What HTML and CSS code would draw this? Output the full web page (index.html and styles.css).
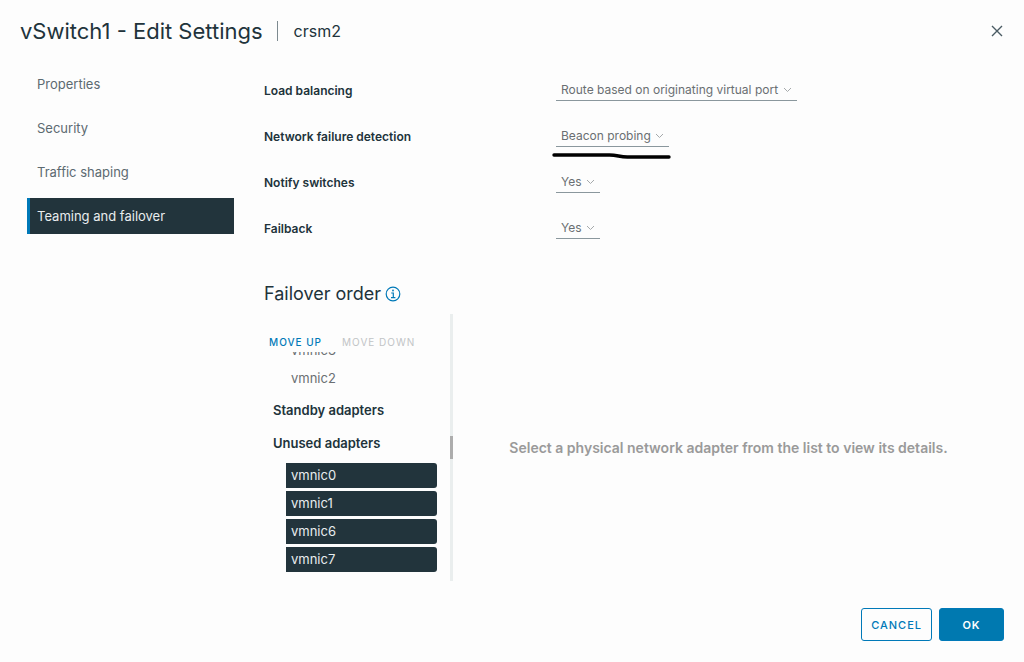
FILE: index.html
```html
<!DOCTYPE html>
<html lang="en">
<head>
    <meta charset="UTF-8">
    <meta name="viewport" content="width=device-width, initial-scale=1.0">
    <title>vSwitch1 - Edit Settings</title>
    <link rel="stylesheet" href="styles.css">
</head>
<body>
    <div class="dialog">
        <header class="dialog-header">
            <h1>vSwitch1 - Edit Settings</h1>
            <span class="host">crsm2</span>
            <button type="button" class="close" aria-label="Close">
                <svg width="12" height="12" viewBox="0 0 12 12"><path d="M1 1l10 10M11 1L1 11" fill="none" stroke="#4a5b63" stroke-width="1.4"/></svg>
            </button>
        </header>

        <div class="dialog-body">
            <nav class="sidebar">
                <a href="#properties">Properties</a>
                <a href="#security">Security</a>
                <a href="#shaping">Traffic shaping</a>
                <a href="#teaming" class="active">Teaming and failover</a>
            </nav>

            <main class="content">
                <form class="settings">
                    <div class="form-row">
                        <label for="loadBalancing">Load balancing</label>
                        <div class="select">
                            <select id="loadBalancing"><option>Route based on originating virtual port</option></select>
                            <svg class="caret" width="9" height="6" viewBox="0 0 9 6"><path d="M1 1L4.5 4.5L8 1" fill="none" stroke="#a5a9ab"/></svg>
                        </div>
                    </div>
                    <div class="form-row">
                        <label for="failureDetection">Network failure detection</label>
                        <div class="select">
                            <select id="failureDetection"><option>Beacon probing</option></select>
                            <svg class="caret" width="9" height="6" viewBox="0 0 9 6"><path d="M1 1L4.5 4.5L8 1" fill="none" stroke="#a5a9ab"/></svg>
                            <svg class="marker" height="6" viewBox="0 0 120 6" preserveAspectRatio="none"><path d="M2 2H58C66 2 68 4 76 4H118" fill="none" stroke="#000" stroke-width="3.4" stroke-linecap="round"/></svg>
                        </div>
                    </div>
                    <div class="form-row">
                        <label for="notifySwitches">Notify switches</label>
                        <div class="select">
                            <select id="notifySwitches"><option>Yes</option><option>No</option></select>
                            <svg class="caret" width="9" height="6" viewBox="0 0 9 6"><path d="M1 1L4.5 4.5L8 1" fill="none" stroke="#a5a9ab"/></svg>
                        </div>
                    </div>
                    <div class="form-row">
                        <label for="failback">Failback</label>
                        <div class="select">
                            <select id="failback"><option>Yes</option><option>No</option></select>
                            <svg class="caret" width="9" height="6" viewBox="0 0 9 6"><path d="M1 1L4.5 4.5L8 1" fill="none" stroke="#a5a9ab"/></svg>
                        </div>
                    </div>
                </form>

                <h2>
                    Failover order
                    <svg width="16" height="16" viewBox="0 0 16 16" fill="none" stroke="#0079b8"><circle cx="8" cy="8" r="6.8" stroke-width="1.2"/><path d="M6.2 7H8.3V11.5M6 11.6H10.4" stroke-width="1.2"/><circle cx="8" cy="4.5" r=".9" fill="#0079b8" stroke="none"/></svg>
                </h2>

                <div class="failover">
                    <section class="adapters">
                        <div class="toolbar">
                            <button type="button">MOVE UP</button>
                            <button type="button" disabled>MOVE DOWN</button>
                        </div>
                        <div class="adapter-list">
                            <ul>
                                <li>vmnic3</li>
                                <li>vmnic2</li>
                            </ul>
                            <h3>Standby adapters</h3>
                            <h3>Unused adapters</h3>
                            <ul>
                                <li class="selected">vmnic0</li>
                                <li class="selected">vmnic1</li>
                                <li class="selected">vmnic6</li>
                                <li class="selected">vmnic7</li>
                            </ul>
                        </div>
                    </section>
                    <div class="splitter"><span class="handle"></span></div>
                    <p class="details">Select a physical network adapter from the list to view its details.</p>
                </div>
            </main>
        </div>

        <footer class="dialog-footer">
            <button type="button" class="btn">CANCEL</button>
            <button type="button" class="btn btn-primary">OK</button>
        </footer>
    </div>
</body>
</html>
```
FILE: styles.css
```css
* {
    box-sizing: border-box;
}
body {
    margin: 0;
    background: #fdfdfd;
    color: #21333b;
    font-family: Inter, "Open Sans", sans-serif;
    font-size: 12px;
}
h1, h2, h3, ul, p {
    margin: 0;
    padding: 0;
}
button {
    font-family: inherit;
    cursor: pointer;
}
.dialog {
    display: flex;
    flex-direction: column;
    height: 100vh;
    min-height: 600px;
    padding: 16px 20px 21px;
}
.dialog-header {
    display: flex;
    align-items: center;
    height: 30px;
}
.dialog-header h1 {
    padding-right: 14px;
    font-size: 22px;
    font-weight: 400;
}
.host {
    position: relative;
    padding-left: 17px;
    font-size: 16px;
}
.host::before {
    content: "";
    position: absolute;
    left: 0;
    top: 0;
    width: 1px;
    height: 100%;
    background: #7d8a90;
}
.close {
    display: flex;
    margin-left: auto;
    padding: 1px;
    border: none;
    background: none;
}
.dialog-body {
    display: flex;
    flex: 1;
    gap: 30px;
    min-height: 0;
    padding: 20px 0 27px 7px;
}
.sidebar {
    display: flex;
    flex-direction: column;
    flex: 0 0 207px;
    gap: 8px;
}
.sidebar a {
    padding: 0 7px;
    border-left: 3px solid transparent;
    color: #5c6a71;
    font-size: 13px;
    line-height: 36px;
    text-decoration: none;
}
.sidebar a.active {
    border-left-color: #0079b8;
    background: #22343c;
    color: #e8ecee;
}
.content {
    display: flex;
    flex: 1;
    flex-direction: column;
    min-width: 0;
    padding-top: 13px;
}
.settings {
    display: flex;
    flex-direction: column;
    gap: 24px;
}
.form-row {
    display: grid;
    grid-template-columns: 292px 1fr;
    align-items: center;
}
.form-row label {
    font-weight: 600;
}
.select {
    position: relative;
    justify-self: start;
}
.select select {
    display: block;
    height: 22px;
    padding: 0 18px 0 5px;
    border: none;
    border-bottom: 1px solid #8a979d;
    border-radius: 0;
    appearance: none;
    background: none;
    color: #6a6f72;
    font-family: inherit;
    font-size: 12px;
}
.caret {
    position: absolute;
    right: 5px;
    top: 8px;
    pointer-events: none;
}
.marker {
    position: absolute;
    left: -4px;
    top: 28px;
    width: calc(100% + 6px);
    overflow: visible;
}
.content h2 {
    display: flex;
    align-items: center;
    gap: 4px;
    margin-top: 41px;
    font-size: 18px;
    font-weight: 400;
    line-height: 28px;
}
.failover {
    display: flex;
    flex: 1;
    min-height: 0;
    margin-top: 6px;
}
.adapters {
    display: flex;
    flex: 0 0 186px;
    flex-direction: column;
    padding: 19px 13px 9px 5px;
}
.toolbar {
    display: flex;
    gap: 20px;
}
.toolbar button {
    padding: 0;
    border: none;
    background: none;
    color: #0079b8;
    font-size: 10px;
    font-weight: 500;
    line-height: 19px;
    letter-spacing: 1px;
    white-space: nowrap;
}
.toolbar button:disabled {
    color: #c1c4c6;
    font-weight: 400;
}
.adapter-list {
    display: flex;
    flex: 1;
    flex-direction: column;
    justify-content: flex-end;
    gap: 6px;
    min-height: 0;
    overflow: hidden;
    padding-left: 4px;
}
.adapter-list h3 {
    font-size: 13px;
    font-weight: 600;
    line-height: 27px;
}
.adapter-list ul {
    display: flex;
    flex-direction: column;
    gap: 3px;
    padding-left: 13px;
    list-style: none;
}
.adapter-list li {
    padding-left: 5px;
    color: #6a6f72;
    font-size: 13px;
    line-height: 25px;
}
.adapter-list li.selected {
    border-radius: 0 3px 3px 0;
    background: #22343c;
    color: #e8ecee;
}
.splitter {
    display: flex;
    flex: 0 0 3px;
    align-items: center;
    background: #eaeeee;
}
.handle {
    width: 3px;
    height: 23px;
    background: #adadad;
}
.details {
    flex: 1;
    align-self: center;
    color: #9a9a9a;
    font-size: 14px;
    font-weight: 600;
    text-align: center;
}
.dialog-footer {
    display: flex;
    justify-content: flex-end;
    gap: 7px;
}
.btn {
    min-width: 65px;
    height: 33px;
    padding: 0 9px;
    border: 1px solid #0079b8;
    border-radius: 3px;
    background: none;
    color: #0079b8;
    font-size: 11px;
    font-weight: 500;
    letter-spacing: 1px;
}
.btn-primary {
    background: #0079b0;
    color: #fff;
    font-weight: 600;
}
```
